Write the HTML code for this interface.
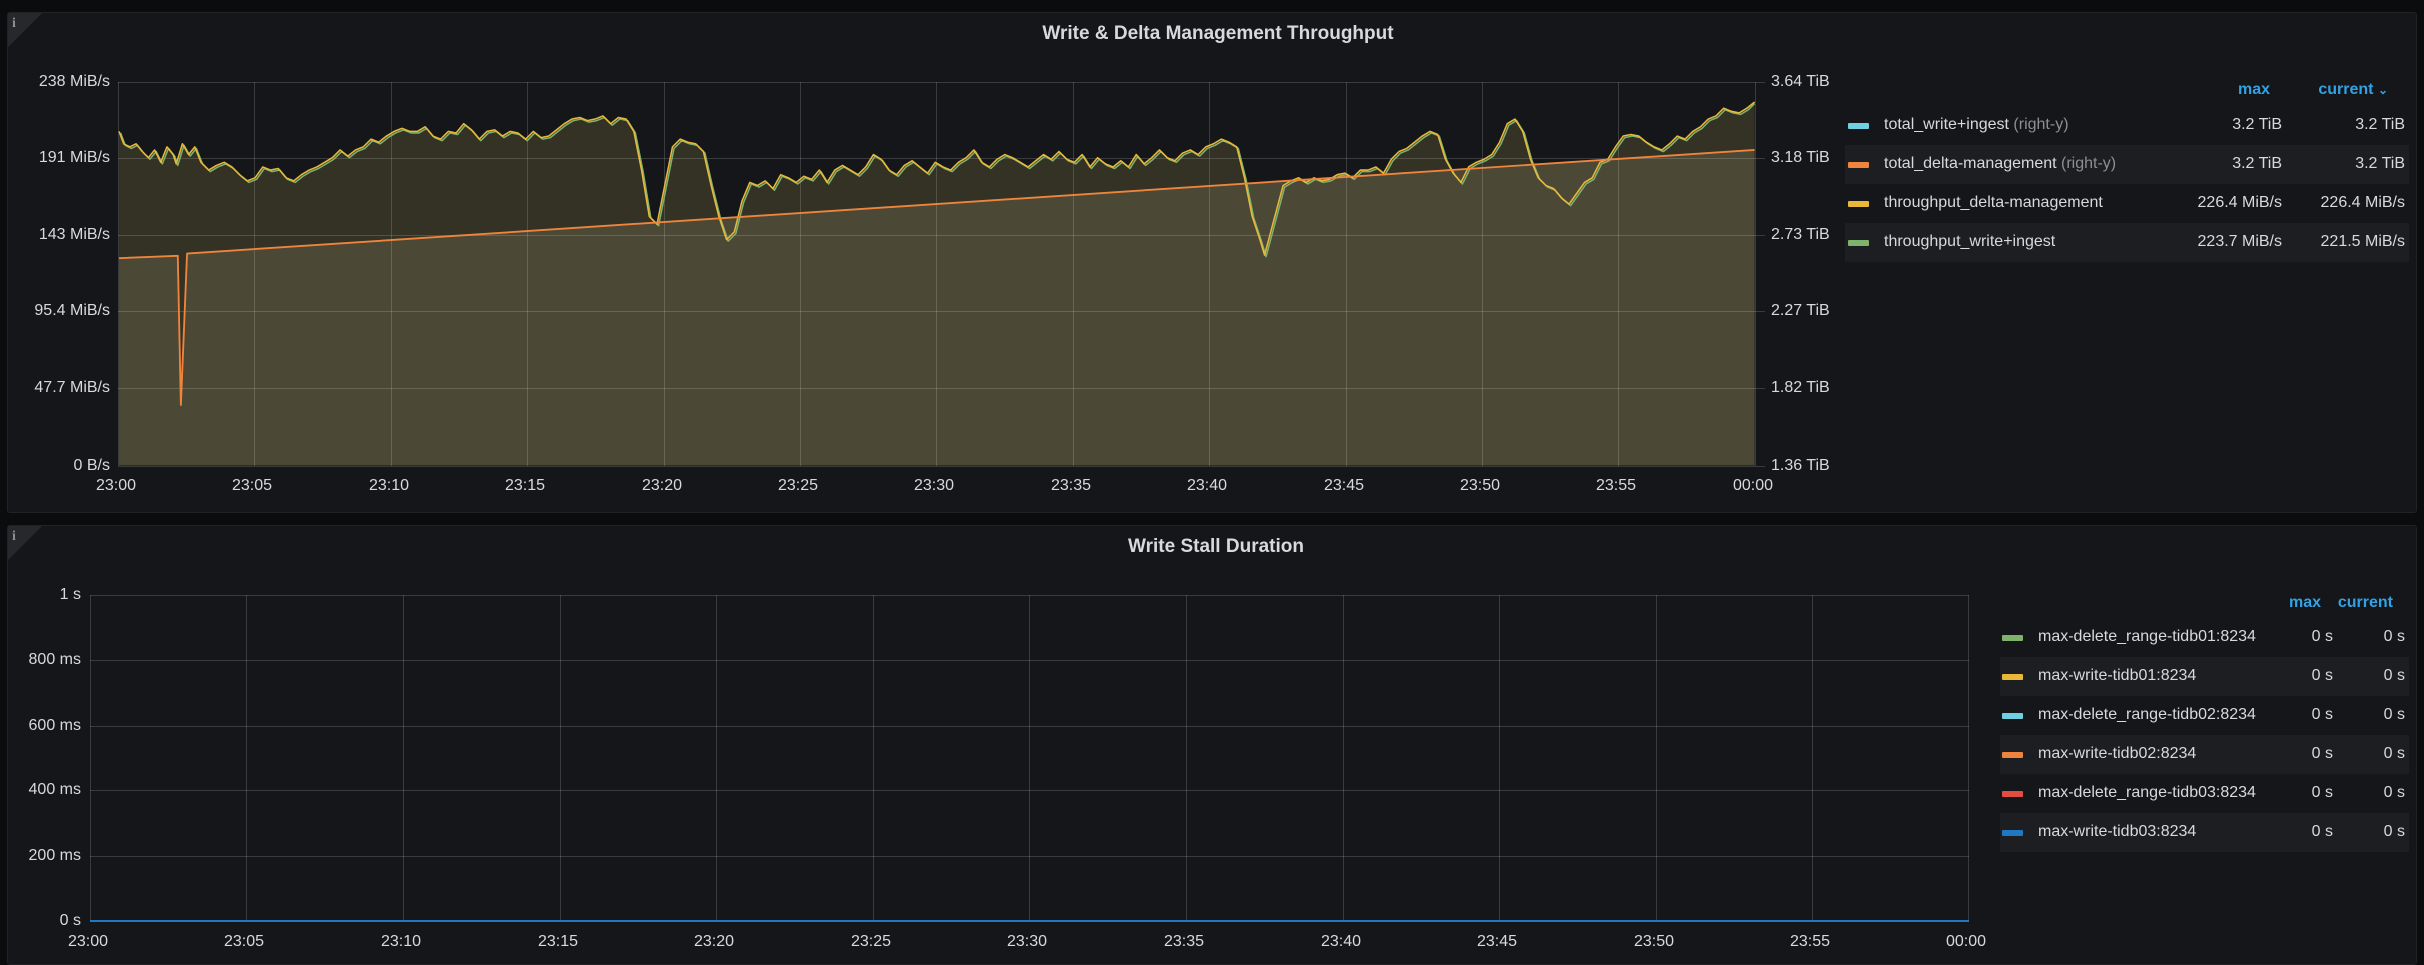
<!DOCTYPE html>
<html><head><meta charset="utf-8"><style>
*{margin:0;padding:0;box-sizing:border-box}
body{width:2424px;height:955px;background:#0b0c0e;position:relative;overflow:hidden;font-family:"Liberation Sans",sans-serif;color:#d8d9da}
.panel{position:absolute;background:#141619;border:1px solid #202226;border-radius:3px}
.t{position:absolute;white-space:nowrap;font-size:16px;line-height:18px}
.r{text-align:right}
.title{position:absolute;font-weight:bold;font-size:19px;color:#d8d9da;white-space:nowrap;transform:translateX(-50%)}
.hdr{color:#33a2e5;font-weight:bold;font-size:16px}
.sw{position:absolute;width:21px;height:6px;border-radius:1px}
.rowbg{position:absolute;background:#1c1e22}
.info{position:absolute;width:0;height:0;border-top:34px solid #26282c;border-right:34px solid transparent}
.i{position:absolute;color:#8e8e8e;font-weight:bold;font-size:14px;font-family:"Liberation Serif",serif}
</style></head><body>
<div class="panel" style="left:7px;top:12px;width:2410px;height:501px"></div>
<div class="panel" style="left:7px;top:525px;width:2410px;height:440px"></div>
<div class="info" style="left:8px;top:13px"></div><div class="i" style="left:12px;top:16px">i</div>
<div class="info" style="left:8px;top:526px"></div><div class="i" style="left:12px;top:529px">i</div>
<div class="title" style="left:1218px;top:23px">Write &amp; Delta Management Throughput</div>
<div class="title" style="left:1216px;top:536px">Write Stall Duration</div>

<svg width="2424" height="955" style="position:absolute;left:0;top:0">
<g transform="scale(1.54592)">
<path d="M77,85 L80,93 84,95 88,93 92,98 96,102 100,97 104,105 108,95 112,100 114,106 118,93 122,100 126,95 130,105 135,110 140,107 145,105 150,108 155,113 160,117 165,115 170,108 175,110 180,109 185,115 190,117 195,113 200,110 205,108 210,105 215,102 220,97 225,101 230,97 235,95 240,90 245,92 250,88 255,85 260,83 265,85 270,85 275,82 280,88 285,90 290,85 295,86 300,80 305,84 310,90 315,85 320,84 325,88 330,85 335,86 340,90 345,85 350,89 355,88 360,84 365,80 370,77 375,76 380,78 385,77 390,75 395,80 400,76 405,77 410,85 415,110 420,140 425,145 430,120 435,95 440,90 445,92 450,93 455,98 460,120 465,140 470,155 475,150 480,130 485,118 490,120 495,117 500,122 505,113 510,115 515,118 520,114 525,116 530,110 535,118 540,110 545,107 550,110 555,113 560,108 565,100 570,103 575,110 580,113 585,107 590,104 595,108 600,112 605,105 610,108 615,110 620,105 625,102 630,97 635,105 640,108 645,103 650,100 655,102 660,105 665,108 670,104 675,100 680,103 685,98 690,103 695,105 700,100 705,108 710,102 715,106 720,108 725,104 730,108 735,100 740,106 745,102 750,97 755,102 760,104 765,99 770,97 775,100 780,95 785,93 790,90 795,92 800,95 805,115 810,140 815,155 818,165 822,150 826,135 830,120 835,117 840,115 845,118 850,115 855,117 860,116 865,113 870,112 875,115 880,110 885,110 890,108 895,112 900,103 905,98 910,96 915,92 920,88 925,85 930,87 935,103 940,112 945,118 950,108 955,105 960,103 965,100 970,92 975,80 980,77 985,85 990,103 995,115 1000,120 1005,122 1010,128 1015,132 1020,125 1025,118 1030,115 1035,105 1040,103 1045,95 1050,88 1055,87 1060,88 1065,92 1070,95 1075,97 1080,93 1085,88 1090,90 1095,85 1100,82 1105,77 1110,75 1115,70 1120,72 1125,73 1130,70 1135,66 L1135,301 L77,301 Z" fill="#333225"/>
<path d="M77,167 L115,165.5 L117,262 L121,164 L1135,97 L1135,301 L77,301 Z" fill="#4b4836"/>
</g>
<g stroke="#ffffff" stroke-opacity="0.16" stroke-width="1">
<path d="M118,82.5H1755M118,158.5H1755M118,235.5H1755M118,311.5H1755M118,388.5H1755M118,466.5H1755"/>
<path d="M118.5,82V466M254.5,82V466M391.5,82V466M527.5,82V466M664.5,82V466M800.5,82V466M936.5,82V466M1073.5,82V466M1209.5,82V466M1346.5,82V466M1482.5,82V466M1618.5,82V466M1755.5,82V466"/>
<path d="M1755,82.5H1765M1755,158.5H1765M1755,235.5H1765M1755,311.5H1765M1755,388.5H1765M1755,466.5H1765"/>
<path d="M90,595.5H1969M90,660.5H1969M90,726.5H1969M90,790.5H1969M90,856.5H1969M90,921.5H1969"/>
<path d="M90.5,595V921M246.5,595V921M403.5,595V921M560.5,595V921M716.5,595V921M873.5,595V921M1029.5,595V921M1186.5,595V921M1343.5,595V921M1499.5,595V921M1656.5,595V921M1812.5,595V921M1968.5,595V921"/>
</g>
<g transform="scale(1.54592)" fill="none" stroke-width="1" stroke-linejoin="round">
<path transform="translate(1,1)" stroke="#7eb26d" d="M77,85 L80,93 84,95 88,93 92,98 96,102 100,97 104,105 108,95 112,100 114,106 118,93 122,100 126,95 130,105 135,110 140,107 145,105 150,108 155,113 160,117 165,115 170,108 175,110 180,109 185,115 190,117 195,113 200,110 205,108 210,105 215,102 220,97 225,101 230,97 235,95 240,90 245,92 250,88 255,85 260,83 265,85 270,85 275,82 280,88 285,90 290,85 295,86 300,80 305,84 310,90 315,85 320,84 325,88 330,85 335,86 340,90 345,85 350,89 355,88 360,84 365,80 370,77 375,76 380,78 385,77 390,75 395,80 400,76 405,77 410,85 415,110 420,140 425,145 430,120 435,95 440,90 445,92 450,93 455,98 460,120 465,140 470,155 475,150 480,130 485,118 490,120 495,117 500,122 505,113 510,115 515,118 520,114 525,116 530,110 535,118 540,110 545,107 550,110 555,113 560,108 565,100 570,103 575,110 580,113 585,107 590,104 595,108 600,112 605,105 610,108 615,110 620,105 625,102 630,97 635,105 640,108 645,103 650,100 655,102 660,105 665,108 670,104 675,100 680,103 685,98 690,103 695,105 700,100 705,108 710,102 715,106 720,108 725,104 730,108 735,100 740,106 745,102 750,97 755,102 760,104 765,99 770,97 775,100 780,95 785,93 790,90 795,92 800,95 805,115 810,140 815,155 818,165 822,150 826,135 830,120 835,117 840,115 845,118 850,115 855,117 860,116 865,113 870,112 875,115 880,110 885,110 890,108 895,112 900,103 905,98 910,96 915,92 920,88 925,85 930,87 935,103 940,112 945,118 950,108 955,105 960,103 965,100 970,92 975,80 980,77 985,85 990,103 995,115 1000,120 1005,122 1010,128 1015,132 1020,125 1025,118 1030,115 1035,105 1040,103 1045,95 1050,88 1055,87 1060,88 1065,92 1070,95 1075,97 1080,93 1085,88 1090,90 1095,85 1100,82 1105,77 1110,75 1115,70 1120,72 1125,73 1130,70 1134,66"/>
<path stroke="#eab839" d="M77,85 L80,93 84,95 88,93 92,98 96,102 100,97 104,105 108,95 112,100 114,106 118,93 122,100 126,95 130,105 135,110 140,107 145,105 150,108 155,113 160,117 165,115 170,108 175,110 180,109 185,115 190,117 195,113 200,110 205,108 210,105 215,102 220,97 225,101 230,97 235,95 240,90 245,92 250,88 255,85 260,83 265,85 270,85 275,82 280,88 285,90 290,85 295,86 300,80 305,84 310,90 315,85 320,84 325,88 330,85 335,86 340,90 345,85 350,89 355,88 360,84 365,80 370,77 375,76 380,78 385,77 390,75 395,80 400,76 405,77 410,85 415,110 420,140 425,145 430,120 435,95 440,90 445,92 450,93 455,98 460,120 465,140 470,155 475,150 480,130 485,118 490,120 495,117 500,122 505,113 510,115 515,118 520,114 525,116 530,110 535,118 540,110 545,107 550,110 555,113 560,108 565,100 570,103 575,110 580,113 585,107 590,104 595,108 600,112 605,105 610,108 615,110 620,105 625,102 630,97 635,105 640,108 645,103 650,100 655,102 660,105 665,108 670,104 675,100 680,103 685,98 690,103 695,105 700,100 705,108 710,102 715,106 720,108 725,104 730,108 735,100 740,106 745,102 750,97 755,102 760,104 765,99 770,97 775,100 780,95 785,93 790,90 795,92 800,95 805,115 810,140 815,155 818,165 822,150 826,135 830,120 835,117 840,115 845,118 850,115 855,117 860,116 865,113 870,112 875,115 880,110 885,110 890,108 895,112 900,103 905,98 910,96 915,92 920,88 925,85 930,87 935,103 940,112 945,118 950,108 955,105 960,103 965,100 970,92 975,80 980,77 985,85 990,103 995,115 1000,120 1005,122 1010,128 1015,132 1020,125 1025,118 1030,115 1035,105 1040,103 1045,95 1050,88 1055,87 1060,88 1065,92 1070,95 1075,97 1080,93 1085,88 1090,90 1095,85 1100,82 1105,77 1110,75 1115,70 1120,72 1125,73 1130,70 1135,66"/>
<path stroke="#ef843c" stroke-width="1.2" d="M77,167 L115,165.5 L117,262 L121,164 L1135,97"/>
</g>
<path d="M90,921H1969" stroke="#1f78c1" stroke-width="2"/>
</svg>

<!-- panel 1 axes -->
<div class="t r" style="right:2314px;top:73px">238 MiB/s</div>
<div class="t r" style="right:2314px;top:149px">191 MiB/s</div>
<div class="t r" style="right:2314px;top:226px">143 MiB/s</div>
<div class="t r" style="right:2314px;top:302px">95.4 MiB/s</div>
<div class="t r" style="right:2314px;top:379px">47.7 MiB/s</div>
<div class="t r" style="right:2314px;top:457px">0 B/s</div>
<div class="t" style="left:1771px;top:73px">3.64 TiB</div>
<div class="t" style="left:1771px;top:149px">3.18 TiB</div>
<div class="t" style="left:1771px;top:226px">2.73 TiB</div>
<div class="t" style="left:1771px;top:302px">2.27 TiB</div>
<div class="t" style="left:1771px;top:379px">1.82 TiB</div>
<div class="t" style="left:1771px;top:457px">1.36 TiB</div>
<div style="position:absolute;top:477px;left:0">
<div class="t" style="left:96px">23:00</div><div class="t" style="left:232px">23:05</div><div class="t" style="left:369px">23:10</div><div class="t" style="left:505px">23:15</div><div class="t" style="left:642px">23:20</div><div class="t" style="left:778px">23:25</div><div class="t" style="left:914px">23:30</div><div class="t" style="left:1051px">23:35</div><div class="t" style="left:1187px">23:40</div><div class="t" style="left:1324px">23:45</div><div class="t" style="left:1460px">23:50</div><div class="t" style="left:1596px">23:55</div><div class="t" style="left:1733px">00:00</div>
</div>
<!-- legend 1 -->
<div class="rowbg" style="left:1845px;top:145px;width:564px;height:39px"></div>
<div class="rowbg" style="left:1845px;top:223px;width:564px;height:39px"></div>
<div class="t hdr r" style="right:154px;top:81px">max</div>
<div class="t hdr r" style="right:36px;top:81px">current <span style="font-size:12px">&#8964;</span></div>
<div class="sw" style="left:1848px;top:123px;background:#6ed0e0"></div>
<div class="sw" style="left:1848px;top:162px;background:#ef843c"></div>
<div class="sw" style="left:1848px;top:201px;background:#eab839"></div>
<div class="sw" style="left:1848px;top:240px;background:#7eb26d"></div>
<div class="t" style="left:1884px;top:116px">total_write+ingest <span style="color:#8e8e8e">(right-y)</span></div>
<div class="t" style="left:1884px;top:155px">total_delta-management <span style="color:#8e8e8e">(right-y)</span></div>
<div class="t" style="left:1884px;top:194px">throughput_delta-management</div>
<div class="t" style="left:1884px;top:233px">throughput_write+ingest</div>
<div class="t r" style="right:142px;top:116px">3.2 TiB</div><div class="t r" style="right:19px;top:116px">3.2 TiB</div>
<div class="t r" style="right:142px;top:155px">3.2 TiB</div><div class="t r" style="right:19px;top:155px">3.2 TiB</div>
<div class="t r" style="right:142px;top:194px">226.4 MiB/s</div><div class="t r" style="right:19px;top:194px">226.4 MiB/s</div>
<div class="t r" style="right:142px;top:233px">223.7 MiB/s</div><div class="t r" style="right:19px;top:233px">221.5 MiB/s</div>

<!-- panel 2 axes -->
<div class="t r" style="right:2343px;top:586px">1 s</div>
<div class="t r" style="right:2343px;top:651px">800 ms</div>
<div class="t r" style="right:2343px;top:717px">600 ms</div>
<div class="t r" style="right:2343px;top:781px">400 ms</div>
<div class="t r" style="right:2343px;top:847px">200 ms</div>
<div class="t r" style="right:2343px;top:912px">0 s</div>
<div style="position:absolute;top:933px;left:0">
<div class="t" style="left:68px">23:00</div><div class="t" style="left:224px">23:05</div><div class="t" style="left:381px">23:10</div><div class="t" style="left:538px">23:15</div><div class="t" style="left:694px">23:20</div><div class="t" style="left:851px">23:25</div><div class="t" style="left:1007px">23:30</div><div class="t" style="left:1164px">23:35</div><div class="t" style="left:1321px">23:40</div><div class="t" style="left:1477px">23:45</div><div class="t" style="left:1634px">23:50</div><div class="t" style="left:1790px">23:55</div><div class="t" style="left:1946px">00:00</div>
</div>
<!-- legend 2 -->
<div class="rowbg" style="left:2000px;top:657px;width:409px;height:39px"></div>
<div class="rowbg" style="left:2000px;top:735px;width:409px;height:39px"></div>
<div class="rowbg" style="left:2000px;top:813px;width:409px;height:39px"></div>
<div class="t hdr r" style="right:103px;top:594px">max</div>
<div class="t hdr r" style="right:31px;top:594px">current</div>
<div class="sw" style="left:2002px;top:635px;background:#7eb26d"></div>
<div class="sw" style="left:2002px;top:674px;background:#eab839"></div>
<div class="sw" style="left:2002px;top:713px;background:#6ed0e0"></div>
<div class="sw" style="left:2002px;top:752px;background:#ef843c"></div>
<div class="sw" style="left:2002px;top:791px;background:#e24d42"></div>
<div class="sw" style="left:2002px;top:830px;background:#1f78c1"></div>
<div class="t" style="left:2038px;top:628px">max-delete_range-tidb01:8234</div>
<div class="t" style="left:2038px;top:667px">max-write-tidb01:8234</div>
<div class="t" style="left:2038px;top:706px">max-delete_range-tidb02:8234</div>
<div class="t" style="left:2038px;top:745px">max-write-tidb02:8234</div>
<div class="t" style="left:2038px;top:784px">max-delete_range-tidb03:8234</div>
<div class="t" style="left:2038px;top:823px">max-write-tidb03:8234</div>
<div class="t r" style="right:91px;top:628px">0 s</div><div class="t r" style="right:19px;top:628px">0 s</div>
<div class="t r" style="right:91px;top:667px">0 s</div><div class="t r" style="right:19px;top:667px">0 s</div>
<div class="t r" style="right:91px;top:706px">0 s</div><div class="t r" style="right:19px;top:706px">0 s</div>
<div class="t r" style="right:91px;top:745px">0 s</div><div class="t r" style="right:19px;top:745px">0 s</div>
<div class="t r" style="right:91px;top:784px">0 s</div><div class="t r" style="right:19px;top:784px">0 s</div>
<div class="t r" style="right:91px;top:823px">0 s</div><div class="t r" style="right:19px;top:823px">0 s</div>
</body></html>
